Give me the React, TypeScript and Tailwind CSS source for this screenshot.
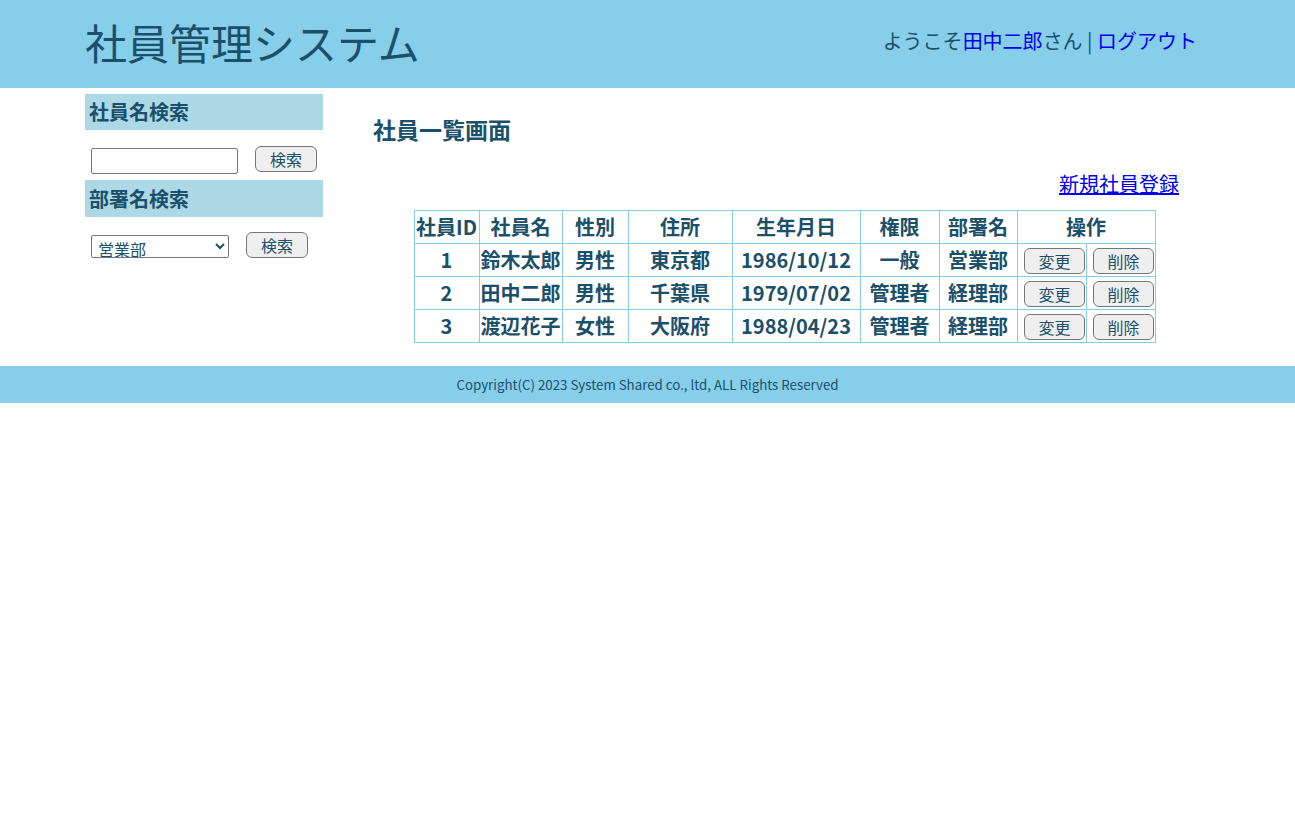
import React from "react";

// 社員一覧画面 — header / sidebar search / employee table / footer

const employees = [
  { id: 1, name: "鈴木太郎", gender: "男性", address: "東京都", birth: "1986/10/12", role: "一般", dept: "営業部" },
  { id: 2, name: "田中二郎", gender: "男性", address: "千葉県", birth: "1979/07/02", role: "管理者", dept: "経理部" },
  { id: 3, name: "渡辺花子", gender: "女性", address: "大阪府", birth: "1988/04/23", role: "管理者", dept: "経理部" },
];

const btn =
  "h-[26px] rounded-[6px] border border-[#767676] bg-[#efefef] text-[16px] leading-none text-[#1a5069] font-normal";

function Header() {
  return (
    <header className="h-[88px] bg-[#87ceeb]">
      <div className="w-[1125px] mx-auto h-full flex items-center justify-between pr-[13px] pb-[4px]">
        <h1 className="text-[42px] font-normal leading-none">社員管理システム</h1>
        <p className="text-[20px] leading-none pb-[2px]">
          ようこそ<a href="#" className="text-[#0000ee]">田中二郎</a>さん |{" "}
          <a href="#" className="text-[#0000ee]">ログアウト</a>
        </p>
      </div>
    </header>
  );
}

function Sidebar() {
  return (
    <aside className="w-[238px] shrink-0 pt-[6px]">
      <h2 className="h-[36px] bg-[#add8e6] px-[4px] flex items-center text-[20px] font-bold">社員名検索</h2>
      <div className="h-[50px] flex items-center gap-[17px] px-[6px] pt-[8px]">
        <input className="w-[147px] h-[26px] mt-[4px] border border-[#767676] rounded-[2px] bg-white" />
        <button className={`${btn} w-[62px]`}>検索</button>
      </div>
      <h2 className="h-[37px] bg-[#add8e6] px-[4px] flex items-center text-[20px] font-bold">部署名検索</h2>
      <div className="h-[52px] flex items-center gap-[17px] px-[6px] pt-[4px]">
        <select className="w-[138px] h-[23px] mt-[2px] border border-[#767676] rounded-[2px] bg-white text-[16px] leading-none pl-[2px]">
          <option>営業部</option>
          <option>経理部</option>
        </select>
        <button className={`${btn} w-[62px]`}>検索</button>
      </div>
    </aside>
  );
}

function EmployeeTable() {
  const th = "border border-[#87ceeb] h-[33px] text-[20px] font-bold px-0";
  const td = "border border-[#87ceeb] h-[33px] text-[20px] font-bold text-center px-0";
  return (
    <table className="mx-auto border-collapse">
      <thead>
        <tr>
          <th className={`${th} w-[65px]`}>社員ID</th>
          <th className={`${th} w-[83px]`}>社員名</th>
          <th className={`${th} w-[66px]`}>性別</th>
          <th className={`${th} w-[104px]`}>住所</th>
          <th className={`${th} w-[128px]`}>生年月日</th>
          <th className={`${th} w-[79px]`}>権限</th>
          <th className={`${th} w-[78px]`}>部署名</th>
          <th className={`${th} w-[138px]`} colSpan={2}>操作</th>
        </tr>
      </thead>
      <tbody>
        {employees.map((e) => (
          <tr key={e.id}>
            <td className={td}>{e.id}</td>
            <td className={td}>{e.name}</td>
            <td className={td}>{e.gender}</td>
            <td className={td}>{e.address}</td>
            <td className={td}>{e.birth}</td>
            <td className={td}>{e.role}</td>
            <td className={td}>{e.dept}</td>
            <td className={`${td} w-[69px]`}>
              <button className={`${btn} w-[61px] ml-[6px]`}>変更</button>
            </td>
            <td className={`${td} w-[69px]`}>
              <button className={`${btn} w-[61px] ml-[6px]`}>削除</button>
            </td>
          </tr>
        ))}
      </tbody>
    </table>
  );
}

export default function App() {
  return (
    <div className="min-h-screen bg-white text-[#1a5069] font-['Noto_Sans_CJK_JP','Noto_Sans',sans-serif]">
      <Header />
      <div className="w-[1125px] mx-auto flex">
        <Sidebar />
        <main className="flex-1 pl-[37px] pr-[31px] pb-[23px]">
          <h2 className="text-[23px] font-bold pt-[30px] pl-[13px] leading-none h-[83px]">社員一覧画面</h2>
          <div className="flex justify-end h-[39px] pt-[3px]">
            <a href="#" className="text-[20px] text-[#0000ee] underline leading-none">新規社員登録</a>
          </div>
          <div className="pl-[30px]">
            <EmployeeTable />
          </div>
        </main>
      </div>
      <footer className="h-[37px] bg-[#87ceeb] flex items-center justify-center text-[13.3px]">
        Copyright(C) 2023 System Shared co., ltd, ALL Rights Reserved
      </footer>
    </div>
  );
}
